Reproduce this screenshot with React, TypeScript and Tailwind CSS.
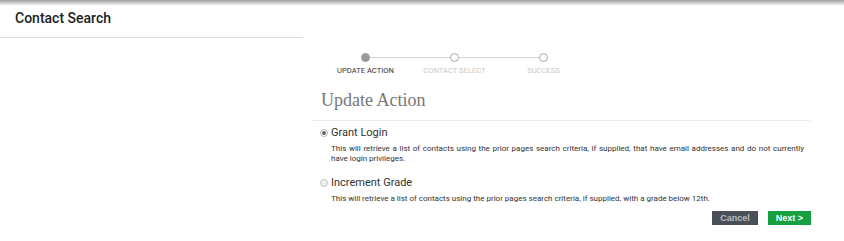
import { useState } from 'react';

const STEPS = [
  { label: 'UPDATE ACTION', active: true },
  { label: 'CONTACT SELECT', active: false },
  { label: 'SUCCESS', active: false },
];

const OPTIONS = [
  {
    id: 'grant',
    label: 'Grant Login',
    text: 'This will retrieve a list of contacts using the prior pages search criteria, if supplied, that have email addresses and do not currently have login privileges.',
  },
  {
    id: 'grade',
    label: 'Increment Grade',
    text: 'This will retrieve a list of contacts using the prior pages search criteria, if supplied, with a grade below 12th.',
  },
];

function Stepper() {
  return (
    <div className="grid grid-cols-3 w-[267px] ml-[10px]">
      {STEPS.map((s, i) => (
        <div key={s.label} className="relative flex flex-col items-center">
          {i > 0 && <div className="absolute top-[4px] right-1/2 w-full h-px bg-[#d4d4d4]" />}
          <div
            className={
              s.active
                ? 'relative z-10 w-[9px] h-[9px] rounded-full bg-[#9a9a9a] border border-[#9a9a9a]'
                : 'relative z-10 w-[9px] h-[9px] rounded-full bg-white border border-[#a8a8a8]'
            }
          />
          <span
            className={
              s.active
                ? 'mt-[4px] text-[7.6px] leading-[10px] text-[#333]'
                : 'mt-[4px] text-[7.6px] leading-[10px] text-[#c9c9c9]'
            }
          >
            {s.label}
          </span>
        </div>
      ))}
    </div>
  );
}

export default function App() {
  const [choice, setChoice] = useState('grant');

  return (
    <div className="w-[844px] h-[241px] bg-white font-['Roboto',sans-serif] relative overflow-hidden">
      <div className="absolute top-0 left-0 right-0 h-[6px] bg-gradient-to-b from-[#a0a0a0] to-transparent" />
      <div className="flex">
        {/* Sidebar */}
        <div className="w-[303px] shrink-0">
          <div className="h-[38px] border-b border-[#dcdcdc] pl-[15px] pt-[9px]">
            <h1 className="text-[14px] leading-[18px] font-medium text-[#222]">Contact Search</h1>
          </div>
        </div>

        {/* Main */}
        <div className="w-[500px] ml-[8px] pt-[53px]">
          <Stepper />
          <h2 className="mt-[13px] ml-[10px] font-['Liberation_Serif',serif] text-[18px] leading-[22px] text-[#777]">
            Update Action
          </h2>
          <div className="mt-[9px] h-px bg-[#ebebeb] w-[499px]" />

          <div className="mt-[5px] ml-[9px] flex flex-col gap-[12px]">
            {OPTIONS.map((o) => (
              <div key={o.id}>
                <label className="flex items-center gap-[3px] text-[11px] leading-[14px] text-[#333]">
                  <span
                    className={
                      choice === o.id
                        ? 'w-[8px] h-[8px] rounded-full border border-[#b5b5b5] bg-white flex items-center justify-center'
                        : 'w-[8px] h-[8px] rounded-full border border-[#c4c4c4] bg-[#f0f0f0]'
                    }
                    onClick={() => setChoice(o.id)}
                  >
                    {choice === o.id && <span className="w-[4px] h-[4px] rounded-full bg-[#666]" />}
                  </span>
                  {o.label}
                </label>
                <p className="mt-[4px] ml-[11px] w-[473px] text-justify text-[8px] leading-[10px] text-[#333]">
                  {o.text}
                </p>
              </div>
            ))}
          </div>

          <div className="mt-[7px] flex justify-end gap-[10px]">
            <button className="w-[46px] h-[14px] bg-[#4b5058] text-[#b9bcc0] text-[9px] font-bold font-['Liberation_Sans',sans-serif] leading-[14px]">
              Cancel
            </button>
            <button className="w-[43px] h-[14px] bg-[#16a03f] text-white text-[9px] font-bold font-['Liberation_Sans',sans-serif] leading-[14px]">
              Next &gt;
            </button>
          </div>
        </div>
      </div>
    </div>
  );
}
